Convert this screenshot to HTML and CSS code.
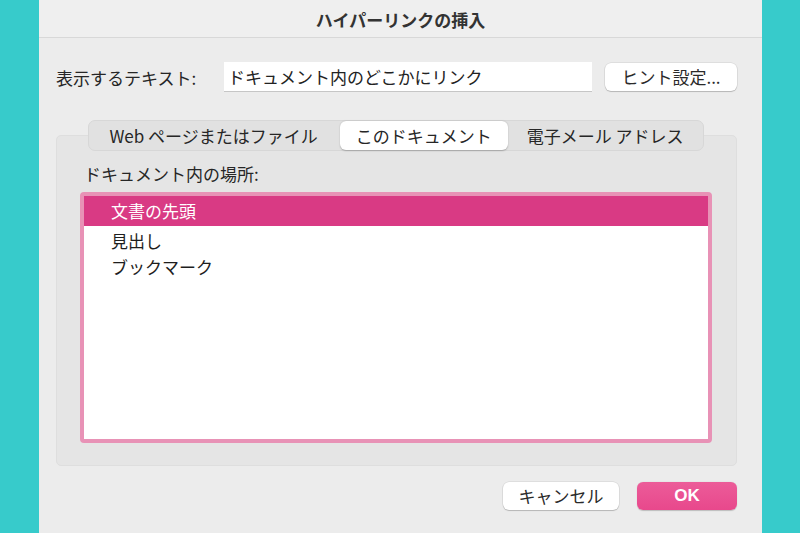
FILE: index.html
```html
<!DOCTYPE html>
<html lang="ja">
<head>
<meta charset="utf-8">
<link rel="stylesheet" href="styles.css">
</head>
<body>
<div class="dialog">
  <div class="titlebar">ハイパーリンクの挿入</div>
  <div class="textrow">
    <span class="label">表示するテキスト:</span>
    <div class="input">ドキュメント内のどこかにリンク</div>
    <button class="btn hint">ヒント設定...</button>
  </div>
  <div class="panel">
    <div class="tabs">
      <div class="tab">Web ページまたはファイル</div>
      <div class="tab active">このドキュメント</div>
      <div class="tab">電子メール アドレス</div>
    </div>
    <div class="sublabel">ドキュメント内の場所:</div>
    <div class="list">
      <div class="item selected">文書の先頭</div>
      <div class="item">見出し</div>
      <div class="item">ブックマーク</div>
    </div>
  </div>
  <div class="footer">
    <button class="btn cancel">キャンセル</button>
    <button class="btn ok">OK</button>
  </div>
</div>
</body>
</html>
```

FILE: styles.css
```css
html, body {
  margin: 0;
  padding: 0;
  height: 100%;
}
body {
  background: #37cbcb;
  font-family: "Noto Sans CJK JP", "Noto Sans", sans-serif;
  color: #222;
  overflow: hidden;
}
.dialog {
  width: 723px;
  height: 533px;
  margin-left: 39px;
  background: #ececec;
  display: flex;
  flex-direction: column;
}
.titlebar {
  height: 38px;
  background: #efefef;
  border-bottom: 1px solid #d8d8d8;
  box-sizing: border-box;
  display: flex;
  align-items: center;
  justify-content: center;
  font-size: 17px;
  font-weight: bold;
  color: #333;
  padding-top: 1px;
}
.textrow {
  display: flex;
  align-items: center;
  margin: 24px 25px 0 17px;
}
.label {
  width: 168px;
  font-size: 17px;
  color: #262626;
}
.input {
  width: 368px;
  height: 30px;
  box-sizing: border-box;
  background: #fff;
  border-bottom: 1px solid #c6c6c6;
  font-size: 17px;
  line-height: 29px;
  padding-left: 4px;
  color: #222;
}
.btn {
  font-family: inherit;
  font-size: 17px;
  border: none;
  border-radius: 6px;
  background: #fff;
  color: #2a2a2a;
  box-shadow: 0 0 0 0.5px rgba(0,0,0,0.12), 0 1px 1px rgba(0,0,0,0.18);
  padding: 0;
  height: 28px;
  line-height: 28px;
}
.hint {
  margin-left: auto;
  width: 132px;
}
.panel {
  margin: 43px 25px 0 17px;
  height: 331px;
  box-sizing: border-box;
  background: #e5e5e5;
  border: 1px solid #dedede;
  border-radius: 5px;
  display: flex;
  flex-direction: column;
  padding: 0 24px 22px 23px;
}
.tabs {
  align-self: center;
  margin-top: -16px;
  display: flex;
  height: 31px;
  box-sizing: border-box;
  background: #e1e1e1;
  border: 1px solid #d7d7d7;
  border-radius: 7px;
  padding: 0;
  align-items: center;
}
.tab {
  font-size: 17px;
  color: #262626;
  height: 29px;
  line-height: 29px;
  padding: 0 19px;
}
.tab:first-child {
  padding: 0 22px 0 20px;
}
.tab.active {
  background: #fff;
  border-radius: 6px;
  box-shadow: 0 0.5px 1.5px rgba(0,0,0,0.25);
  padding: 0 16px;
}
.sublabel {
  font-size: 17px;
  color: #262626;
  margin: 11px 0 6px 4px;
  line-height: 24px;
}
.list {
  flex: 1;
  background: #fff;
  border: 4px solid #e892b6;
  border-radius: 4px;
  padding-top: 0;
}
.item {
  height: 26px;
  line-height: 26px;
  font-size: 17px;
  padding-left: 27px;
  color: #1e1e1e;
}
.item.selected {
  height: 30px;
  line-height: 30px;
  margin-bottom: 2px;
  background: #d93a84;
  color: #fff;
}
.footer {
  display: flex;
  justify-content: flex-end;
  gap: 18px;
  margin: 16px 25px 0 0;
}
.cancel {
  width: 116px;
}
.ok {
  width: 100px;
  background: linear-gradient(#ec5c99, #e8488c);
  color: #fff;
  font-weight: bold;
  font-family: "Liberation Sans", "Noto Sans", sans-serif;
  box-shadow: 0 0.5px 1px rgba(0,0,0,0.2);
}
```
